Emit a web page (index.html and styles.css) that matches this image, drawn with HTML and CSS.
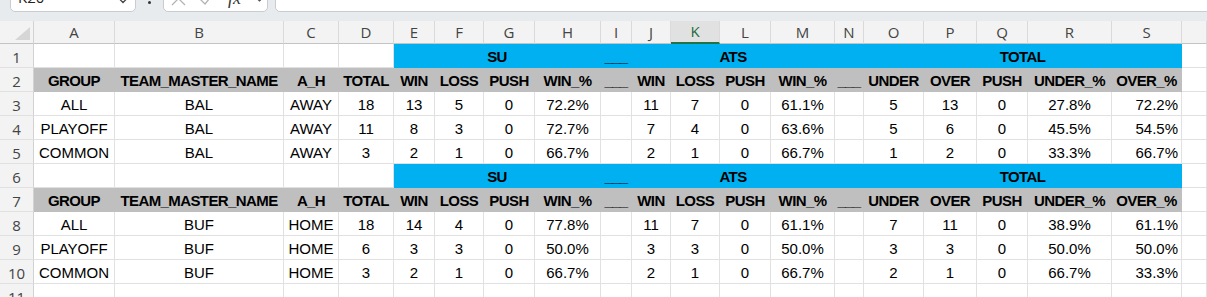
FILE: index.html
```html
<!DOCTYPE html>
<html lang="en">
<head>
<meta charset="utf-8">
<title>Sheet</title>
<link rel="stylesheet" href="styles.css">
</head>
<body>
<div class="toolbar">
  <div class="namebox"><span class="nb-text">K20</span><svg class="nb-chev" width="8" height="6" viewBox="0 0 8 6"><path d="M1 1.5 L4 4.5 L7 1.5" fill="none" stroke="#444" stroke-width="1.3"/></svg></div>
  <div class="vdots"><span class="dot"></span></div>
  <div class="fxbox">
    <svg width="103" height="28" viewBox="0 0 103 28">
      <path d="M8 9 L21 22 M21 9 L8 22" stroke="#b3b3b3" stroke-width="1.3" fill="none"/>
      <path d="M36 16 L41 21 L50 10" stroke="#b3b3b3" stroke-width="1.3" fill="none"/>
      <text x="64" y="21" class="fx">fx</text>
      <path d="M93 15.5 L95.5 18 L98 15.5" stroke="#555" stroke-width="1.2" fill="none"/>
    </svg>
  </div>
  <div class="formula"></div>
</div>
<div class="sheet">
  <div class="corner"><svg width="33" height="22" viewBox="0 0 33 22"><polygon points="15,19 30,6 30,19" fill="#d6d6d6"/></svg></div>
  <div class="ch">A</div><div class="ch">B</div><div class="ch">C</div><div class="ch">D</div><div class="ch">E</div><div class="ch">F</div><div class="ch">G</div><div class="ch">H</div><div class="ch">I</div><div class="ch">J</div><div class="ch sel">K</div><div class="ch">L</div><div class="ch">M</div><div class="ch">N</div><div class="ch">O</div><div class="ch">P</div><div class="ch">Q</div><div class="ch">R</div><div class="ch">S</div><div class="ch"></div>

  <div class="rh">1</div>
  <div class="c"></div><div class="c"></div><div class="c"></div><div class="c"></div>
  <div class="c band s4">SU</div><div class="c band">___</div><div class="c band s4">ATS</div><div class="c band"></div><div class="c band s5">TOTAL</div>
  <div class="c"></div>

  <div class="rh">2</div>
  <div class="c hd">GROUP</div><div class="c hd">TEAM_MASTER_NAME</div><div class="c hd">A_H</div><div class="c hd">TOTAL</div><div class="c hd">WIN</div><div class="c hd">LOSS</div><div class="c hd">PUSH</div><div class="c hd">WIN_%</div><div class="c hd">___</div><div class="c hd">WIN</div><div class="c hd">LOSS</div><div class="c hd">PUSH</div><div class="c hd">WIN_%</div><div class="c hd">___</div><div class="c hd">UNDER</div><div class="c hd">OVER</div><div class="c hd">PUSH</div><div class="c hd">UNDER_%</div><div class="c hd">OVER_%</div>
  <div class="c"></div>

  <div class="rh">3</div>
  <div class="c">ALL</div><div class="c">BAL</div><div class="c">AWAY</div><div class="c">18</div><div class="c">13</div><div class="c">5</div><div class="c">0</div><div class="c">72.2%</div><div class="c"></div><div class="c">11</div><div class="c">7</div><div class="c">0</div><div class="c">61.1%</div><div class="c"></div><div class="c">5</div><div class="c">13</div><div class="c">0</div><div class="c">27.8%</div><div class="c r">72.2%</div>
  <div class="c"></div>

  <div class="rh">4</div>
  <div class="c">PLAYOFF</div><div class="c">BAL</div><div class="c">AWAY</div><div class="c">11</div><div class="c">8</div><div class="c">3</div><div class="c">0</div><div class="c">72.7%</div><div class="c"></div><div class="c">7</div><div class="c">4</div><div class="c">0</div><div class="c">63.6%</div><div class="c"></div><div class="c">5</div><div class="c">6</div><div class="c">0</div><div class="c">45.5%</div><div class="c r">54.5%</div>
  <div class="c"></div>

  <div class="rh">5</div>
  <div class="c">COMMON</div><div class="c">BAL</div><div class="c">AWAY</div><div class="c">3</div><div class="c">2</div><div class="c">1</div><div class="c">0</div><div class="c">66.7%</div><div class="c"></div><div class="c">2</div><div class="c">1</div><div class="c">0</div><div class="c">66.7%</div><div class="c"></div><div class="c">1</div><div class="c">2</div><div class="c">0</div><div class="c">33.3%</div><div class="c r">66.7%</div>
  <div class="c"></div>

  <div class="rh">6</div>
  <div class="c"></div><div class="c"></div><div class="c"></div><div class="c"></div>
  <div class="c band s4">SU</div><div class="c band">___</div><div class="c band s4">ATS</div><div class="c band"></div><div class="c band s5">TOTAL</div>
  <div class="c"></div>

  <div class="rh">7</div>
  <div class="c hd">GROUP</div><div class="c hd">TEAM_MASTER_NAME</div><div class="c hd">A_H</div><div class="c hd">TOTAL</div><div class="c hd">WIN</div><div class="c hd">LOSS</div><div class="c hd">PUSH</div><div class="c hd">WIN_%</div><div class="c hd">___</div><div class="c hd">WIN</div><div class="c hd">LOSS</div><div class="c hd">PUSH</div><div class="c hd">WIN_%</div><div class="c hd">___</div><div class="c hd">UNDER</div><div class="c hd">OVER</div><div class="c hd">PUSH</div><div class="c hd">UNDER_%</div><div class="c hd">OVER_%</div>
  <div class="c"></div>

  <div class="rh">8</div>
  <div class="c">ALL</div><div class="c">BUF</div><div class="c">HOME</div><div class="c">18</div><div class="c">14</div><div class="c">4</div><div class="c">0</div><div class="c">77.8%</div><div class="c"></div><div class="c">11</div><div class="c">7</div><div class="c">0</div><div class="c">61.1%</div><div class="c"></div><div class="c">7</div><div class="c">11</div><div class="c">0</div><div class="c">38.9%</div><div class="c r">61.1%</div>
  <div class="c"></div>

  <div class="rh">9</div>
  <div class="c">PLAYOFF</div><div class="c">BUF</div><div class="c">HOME</div><div class="c">6</div><div class="c">3</div><div class="c">3</div><div class="c">0</div><div class="c">50.0%</div><div class="c"></div><div class="c">3</div><div class="c">3</div><div class="c">0</div><div class="c">50.0%</div><div class="c"></div><div class="c">3</div><div class="c">3</div><div class="c">0</div><div class="c">50.0%</div><div class="c r">50.0%</div>
  <div class="c"></div>

  <div class="rh">10</div>
  <div class="c">COMMON</div><div class="c">BUF</div><div class="c">HOME</div><div class="c">3</div><div class="c">2</div><div class="c">1</div><div class="c">0</div><div class="c">66.7%</div><div class="c"></div><div class="c">2</div><div class="c">1</div><div class="c">0</div><div class="c">66.7%</div><div class="c"></div><div class="c">2</div><div class="c">1</div><div class="c">0</div><div class="c">66.7%</div><div class="c r">33.3%</div>
  <div class="c"></div>

  <div class="rh">11</div>
  <div class="c"></div><div class="c"></div><div class="c"></div><div class="c"></div><div class="c"></div><div class="c"></div><div class="c"></div><div class="c"></div><div class="c"></div><div class="c"></div><div class="c"></div><div class="c"></div><div class="c"></div><div class="c"></div><div class="c"></div><div class="c"></div><div class="c"></div><div class="c"></div><div class="c"></div><div class="c"></div>
</div>
</body>
</html>
```
FILE: styles.css
```css
html, body {
  margin: 0;
  padding: 0;
}
body {
  width: 1207px;
  height: 297px;
  overflow: hidden;
  background: #ffffff;
  font-family: "Liberation Sans", Arial, sans-serif;
}

/* formula bar strip */
.toolbar {
  display: flex;
  height: 21px;
  box-sizing: border-box;
  padding-left: 10px;
  background: #e7ebee;
  overflow: hidden;
}
.namebox {
  width: 126px;
  height: 30px;
  margin-top: -18px;
  box-sizing: border-box;
  border: 1px solid #c8cdd2;
  border-radius: 5px;
  background: #ffffff;
  display: flex;
  align-items: center;
  justify-content: space-between;
  padding: 0 8px 0 7px;
  font-family: "Open Sans", "Noto Sans", sans-serif;
  font-size: 15px;
  color: #222222;
}
.nb-chev {
  display: block;
  margin-top: 8px;
}
.vdots {
  width: 27px;
  display: flex;
  justify-content: center;
  padding-top: 1px;
}
.dot {
  width: 3px;
  height: 3px;
  border-radius: 50%;
  background: #333333;
}
.fxbox {
  width: 105px;
  height: 30px;
  margin-top: -18px;
  box-sizing: border-box;
  border: 1px solid #c8cdd2;
  border-radius: 5px;
  background: #ffffff;
}
.fxbox svg {
  display: block;
}
.fx {
  font-family: "Liberation Serif", serif;
  font-style: italic;
  font-size: 18px;
  fill: #333333;
}
.formula {
  flex: 1;
  height: 30px;
  margin-top: -18px;
  margin-left: 7px;
  margin-right: -10px;
  box-sizing: border-box;
  border: 1px solid #c8cdd2;
  border-radius: 5px;
  background: #ffffff;
}

/* grid */
.sheet {
  display: grid;
  grid-template-columns: 34px 81px 169px 55px 55px 41px 49px 51px 66px 31px 39px 49px 51px 64px 29px 60px 53px 51px 84px 70px 25px;
  grid-template-rows: 23px repeat(11, 24px);
}
.corner {
  box-sizing: border-box;
  background: #f3f3f3;
  border-right: 1px solid #d2d2d2;
  border-bottom: 1px solid #c4c4c4;
}
.corner svg {
  display: block;
}
.ch {
  box-sizing: border-box;
  background: #f3f3f3;
  border-right: 1px solid #dadada;
  border-bottom: 1px solid #c4c4c4;
  font-family: "Open Sans", "Noto Sans", sans-serif;
  font-size: 15px;
  line-height: 22px;
  text-align: center;
  color: #444444;
}
.ch.sel {
  background: #e1e1e1;
  color: #1d6b40;
  border-bottom: 2px solid #217346;
  line-height: 21px;
}
.rh {
  box-sizing: border-box;
  background: #f3f3f3;
  border-right: 1px solid #d2d2d2;
  border-bottom: 1px solid #e0e0e0;
  font-family: "Open Sans", "Noto Sans", sans-serif;
  font-size: 15px;
  line-height: 22px;
  padding-top: 2px;
  text-align: center;
  color: #444444;
  overflow: hidden;
}
.c {
  box-sizing: border-box;
  border-right: 1px solid #e1e1e1;
  border-bottom: 1px solid #e1e1e1;
  font-size: 15px;
  line-height: 22px;
  padding-top: 2px;
  text-align: center;
  white-space: nowrap;
  overflow: hidden;
  color: #000000;
}
.c.r {
  text-align: right;
  padding-right: 3px;
}
.band {
  background: #00b0f0;
  border-color: #00b0f0;
  font-weight: bold;
  letter-spacing: -0.6px;
}
.hd {
  background: #bfbfbf;
  border-color: #bfbfbf;
  font-weight: bold;
  letter-spacing: -0.6px;
}
.s4 {
  grid-column: span 4;
}
.s5 {
  grid-column: span 5;
}
```
